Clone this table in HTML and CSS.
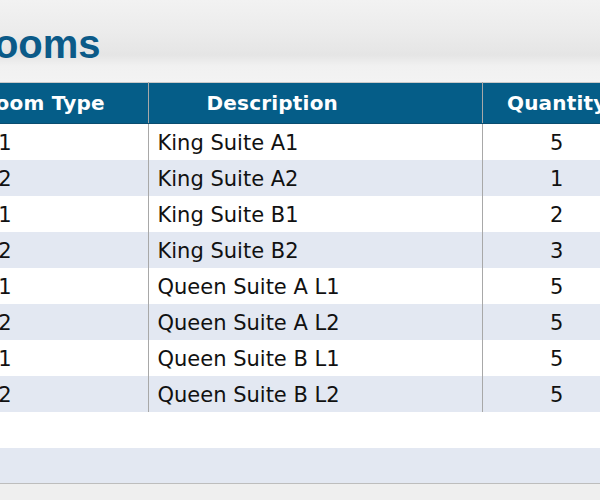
FILE: index.html
```html
<!DOCTYPE html>
<html>
<head>
<meta charset="utf-8">
<link rel="stylesheet" href="styles.css">
</head>
<body>
<div class="page">
  <h1 class="title">Rooms</h1>
  <table class="rooms">
    <colgroup>
      <col class="w-type">
      <col class="w-desc">
      <col class="w-qty">
    </colgroup>
    <thead>
      <tr>
        <th class="c-type">Room Type</th>
        <th class="c-desc">Description</th>
        <th class="c-qty">Quantity</th>
      </tr>
    </thead>
    <tbody>
      <tr><td class="c-type">KSA1</td><td class="c-desc">King Suite A1</td><td class="c-qty">5</td></tr>
      <tr class="alt"><td class="c-type">KSA2</td><td class="c-desc">King Suite A2</td><td class="c-qty">1</td></tr>
      <tr><td class="c-type">KSB1</td><td class="c-desc">King Suite B1</td><td class="c-qty">2</td></tr>
      <tr class="alt"><td class="c-type">KSB2</td><td class="c-desc">King Suite B2</td><td class="c-qty">3</td></tr>
      <tr><td class="c-type">QSAL1</td><td class="c-desc">Queen Suite A L1</td><td class="c-qty">5</td></tr>
      <tr class="alt"><td class="c-type">QSAL2</td><td class="c-desc">Queen Suite A L2</td><td class="c-qty">5</td></tr>
      <tr><td class="c-type">QSBL1</td><td class="c-desc">Queen Suite B L1</td><td class="c-qty">5</td></tr>
      <tr class="alt"><td class="c-type">QSBL2</td><td class="c-desc">Queen Suite B L2</td><td class="c-qty">5</td></tr>
      <tr class="empty"><td colspan="3"></td></tr>
      <tr class="alt empty"><td colspan="3"></td></tr>
    </tbody>
  </table>
</div>
</body>
</html>
```

FILE: styles.css
```css
html, body {
  margin: 0;
  padding: 0;
}
body {
  width: 600px;
  height: 500px;
  overflow: hidden;
  background: linear-gradient(to bottom, #f2f2f2 0px, #ececec 30px, #e5e5e5 55px, #f1f1f1 66px, #f3f3f3 82px, #efefef 82px);
  font-family: "DejaVu Sans", Verdana, sans-serif;
}
.page {
  margin-left: -100px;
  padding-top: 24px;
}
.title {
  margin: 0 0 18px 65px;
  font-family: "Liberation Sans", Arial, sans-serif;
  font-weight: bold;
  font-size: 40px;
  line-height: 40px;
  color: #0b5a88;
}
.rooms {
  border-collapse: collapse;
  table-layout: fixed;
  width: 731px;
  border-top: 1px solid #c9c9c9;
  border-bottom: 1px solid #bdbdbd;
  background: #ffffff;
}
.w-type { width: 248px; }
.w-desc { width: 334px; }
.w-qty { width: 149px; }
.rooms th,
.rooms td {
  box-sizing: border-box;
  padding: 0;
  white-space: nowrap;
}
.rooms th {
  height: 41px;
  background: #055d88;
  color: #ffffff;
  font-weight: bold;
  font-size: 20px;
  letter-spacing: 0.2px;
  border-bottom: 1px solid #0a4d70;
}
.rooms td {
  height: 36px;
  padding-top: 3px;
  font-size: 21px;
  color: #111111;
}
.rooms .c-type,
.rooms .c-desc {
  border-right: 1px solid #a8a8a8;
}
.rooms .c-qty {
  text-align: center;
}
.rooms th.c-type {
  text-align: left;
  padding-left: 80px;
}
.rooms th.c-desc {
  text-align: left;
  padding-left: 58px;
}
.rooms td.c-type {
  text-align: right;
  padding-right: 136px;
}
.rooms td.c-desc {
  text-align: left;
  padding-left: 9px;
}
.rooms tr.alt td {
  background: #e3e8f2;
}
.rooms tr.empty td {
  border: none;
}
```
